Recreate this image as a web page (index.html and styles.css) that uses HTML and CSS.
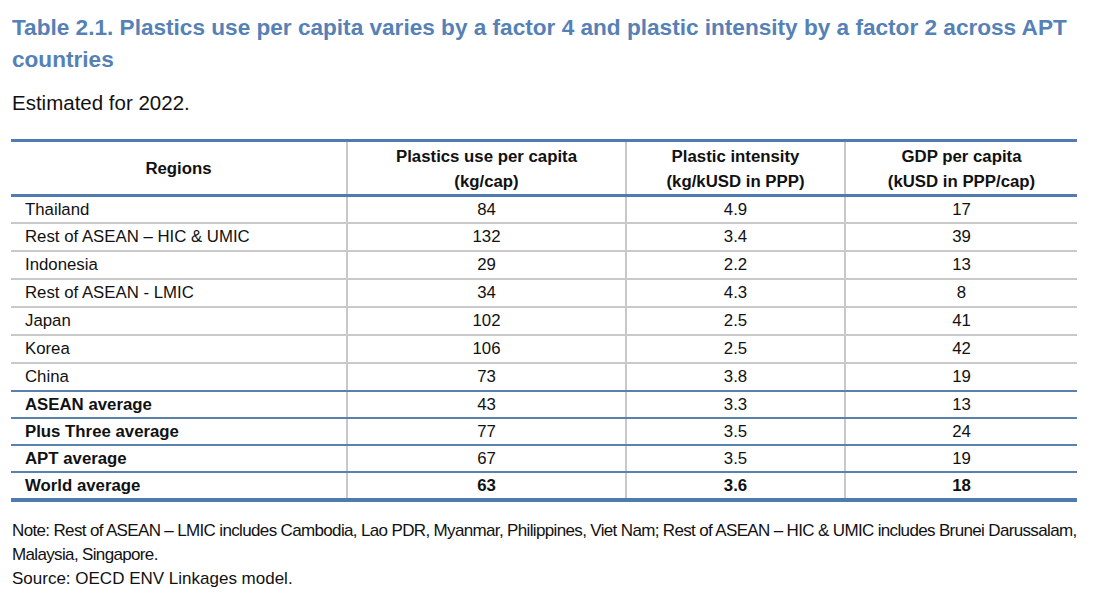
FILE: index.html
```html
<!DOCTYPE html>
<html lang="en">
<head>
<meta charset="utf-8">
<title>Table 2.1</title>
<link rel="stylesheet" href="styles.css">
</head>
<body>
<div class="page">
  <h1 class="title">Table 2.1. Plastics use per capita varies by a factor 4 and plastic intensity by a factor 2 across APT countries</h1>
  <p class="subtitle">Estimated for 2022.</p>
  <table class="data">
    <colgroup>
      <col class="c1"><col class="c2"><col class="c3"><col class="c4">
    </colgroup>
    <thead>
      <tr>
        <th>Regions</th>
        <th>Plastics use per capita<br>(kg/cap)</th>
        <th>Plastic intensity<br>(kg/kUSD in PPP)</th>
        <th>GDP per capita<br>(kUSD in PPP/cap)</th>
      </tr>
    </thead>
    <tbody>
      <tr class="first"><td>Thailand</td><td>84</td><td>4.9</td><td>17</td></tr>
      <tr><td>Rest of ASEAN – HIC &amp; UMIC</td><td>132</td><td>3.4</td><td>39</td></tr>
      <tr><td>Indonesia</td><td>29</td><td>2.2</td><td>13</td></tr>
      <tr><td>Rest of ASEAN - LMIC</td><td>34</td><td>4.3</td><td>8</td></tr>
      <tr><td>Japan</td><td>102</td><td>2.5</td><td>41</td></tr>
      <tr><td>Korea</td><td>106</td><td>2.5</td><td>42</td></tr>
      <tr class="last-country"><td>China</td><td>73</td><td>3.8</td><td>19</td></tr>
      <tr class="avg"><td>ASEAN average</td><td>43</td><td>3.3</td><td>13</td></tr>
      <tr class="avg"><td>Plus Three average</td><td>77</td><td>3.5</td><td>24</td></tr>
      <tr class="avg"><td>APT average</td><td>67</td><td>3.5</td><td>19</td></tr>
      <tr class="avg world"><td>World average</td><td>63</td><td>3.6</td><td>18</td></tr>
    </tbody>
  </table>
  <div class="notes">
    <p class="note">Note: Rest of ASEAN – LMIC includes Cambodia, Lao PDR, Myanmar, Philippines, Viet Nam; Rest of ASEAN – HIC &amp; UMIC includes Brunei Darussalam, Malaysia, Singapore.</p>
    <p class="source">Source: OECD ENV Linkages model.</p>
  </div>
</div>
</body>
</html>
```

FILE: styles.css
```css
html, body {
  margin: 0;
  padding: 0;
  background: #ffffff;
}

.page {
  font-family: "Liberation Sans", Arial, sans-serif;
  color: #111111;
  padding: 12px 0 0 12px;
  width: 1072px;
}

.title {
  margin: 0;
  font-size: 22.6px;
  line-height: 32px;
  font-weight: bold;
  color: #5581b6;
}

.subtitle {
  margin: 14px 0 0 0;
  font-size: 20.5px;
  line-height: 26px;
}

.data {
  margin: 23px 0 0 -1px;
  width: 1066px;
  border-collapse: collapse;
  table-layout: fixed;
  font-size: 16.8px;
}

.c1 { width: 336px; }
.c2 { width: 279px; }
.c3 { width: 219px; }
.c4 { width: 232px; }

.data th {
  font-weight: bold;
  line-height: 24.5px;
  padding: 3px 0 0 0;
  height: 49px;
  text-align: center;
  vertical-align: middle;
  border-top: 3px solid #4f7bb0;
  border-bottom: 3px solid #4f7bb0;
  border-left: 2px solid #c8c8c8;
}

.data td {
  padding: 0;
  line-height: 26px;
  height: 26px;
  text-align: center;
  border-bottom: 2px solid #c9c9c9;
  border-left: 2px solid #c8c8c8;
}

.data th:first-child,
.data td:first-child {
  border-left: none;
}

.data td:first-child {
  text-align: left;
  padding-left: 14px;
}

.data tr.first td {
  line-height: 25px;
  height: 25px;
}

.data tr.last-country td {
  border-bottom: 2px solid #5a80ad;
}

.data tr.avg td {
  line-height: 25px;
  height: 25px;
  border-bottom: 2px solid #5a80ad;
}

.data tr.avg td:first-child {
  font-weight: bold;
}

.data tr.world td {
  border-bottom: 4px solid #4f7bb0;
  font-weight: bold;
}

.notes {
  margin-top: 17px;
  font-size: 17px;
  line-height: 24px;
}

.notes p {
  margin: 0;
}

.note {
  letter-spacing: -0.65px;
}
```
